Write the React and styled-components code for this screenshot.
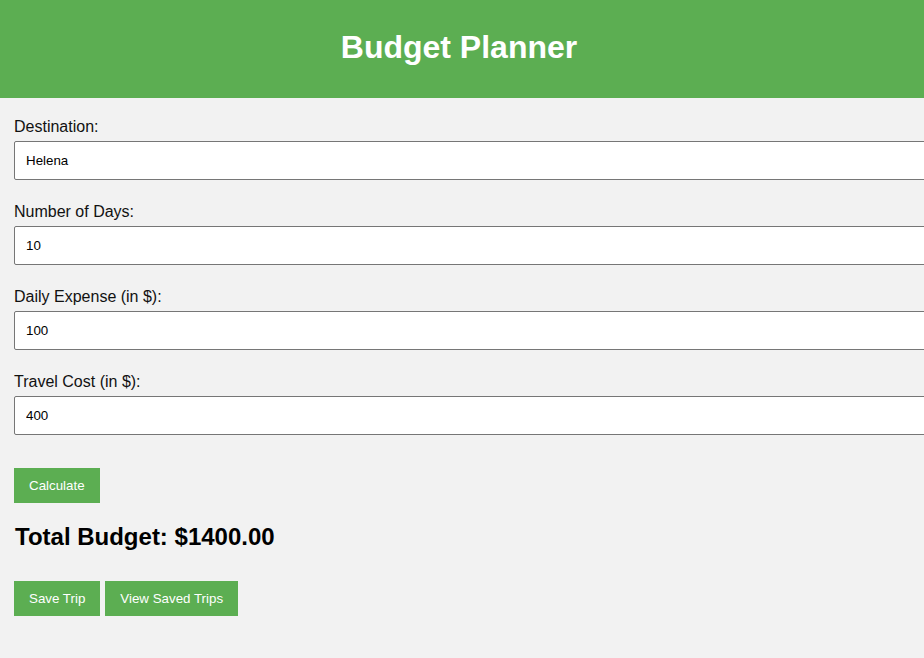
import React, { useState } from "react";
import styled, { createGlobalStyle } from "styled-components";

const GlobalStyle = createGlobalStyle`
  body {
    margin: 0;
    background-color: #f2f2f2;
    font-family: "Liberation Sans", Arial, sans-serif;
    overflow: hidden;
  }
`;

const fields = [
  { id: "destination", label: "Destination:", value: "Helena" },
  { id: "days", label: "Number of Days:", value: "10" },
  { id: "daily", label: "Daily Expense (in $):", value: "100" },
  { id: "travel", label: "Travel Cost (in $):", value: "400" },
];

function App() {
  const [values, setValues] = useState(
    Object.fromEntries(fields.map((f) => [f.id, f.value]))
  );
  const [total, setTotal] = useState(1400);

  const handleCalculate = () => {
    const days = parseFloat(values.days) || 0;
    const daily = parseFloat(values.daily) || 0;
    const travel = parseFloat(values.travel) || 0;
    setTotal(days * daily + travel);
  };

  return (
    <>
      <GlobalStyle />
      <Header>
        <h1>Budget Planner</h1>
      </Header>
      <Container>
        {fields.map((field) => (
          <Field key={field.id}>
            <label htmlFor={field.id}>{field.label}</label>
            <Input
              id={field.id}
              value={values[field.id]}
              onChange={(e) =>
                setValues({ ...values, [field.id]: e.target.value })
              }
            />
          </Field>
        ))}
        <Button onClick={handleCalculate}>Calculate</Button>
        <Total>Total Budget: ${total.toFixed(2)}</Total>
        <Actions>
          <Button>Save Trip</Button>
          <Button>View Saved Trips</Button>
        </Actions>
      </Container>
    </>
  );
}

const Header = styled.header`
  height: 98px;
  box-sizing: border-box;
  padding: 0 6px 4px 0;
  background-color: #5cae52;
  display: flex;
  align-items: center;
  justify-content: center;
  h1 {
    margin: 0;
    color: white;
    font-size: 32px;
    font-weight: bold;
  }
`;

const Container = styled.div`
  padding: 20px 0 0 14px;
`;

const Field = styled.div`
  display: flex;
  flex-direction: column;
  gap: 5px;
  margin-bottom: 23px;
  label {
    font-size: 16px;
    line-height: 18px;
    color: #111;
  }
`;

const Input = styled.input`
  box-sizing: border-box;
  width: 930px;
  height: 39px;
  padding: 0 11px;
  border: 1px solid #767676;
  border-radius: 2px;
  background: white;
  font-family: "Liberation Sans", Arial, sans-serif;
  font-size: 13.33px;
  color: #000;
  outline: none;
`;

const Button = styled.button`
  height: 35px;
  padding: 0 15px;
  border: none;
  background-color: #5cae52;
  color: white;
  font-family: "Liberation Sans", Arial, sans-serif;
  font-size: 13.33px;
  font-weight: normal;
  cursor: pointer;
  margin-top: 10px;
`;

const Total = styled.h2`
  margin: 20px 0 20px 1px;
  font-size: 24px;
  line-height: 28px;
  color: #000;
`;

const Actions = styled.div`
  display: flex;
  gap: 5px;
  button {
    margin-top: 10px;
  }
`;

export default App;
